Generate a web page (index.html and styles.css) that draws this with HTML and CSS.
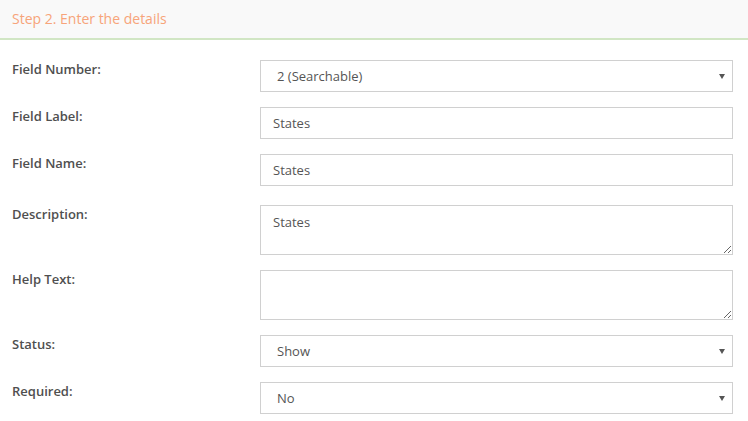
FILE: index.html
```html
<!DOCTYPE html>
<html lang="en">
<head>
<meta charset="utf-8">
<title>Step 2. Enter the details</title>
<link rel="stylesheet" href="styles.css">
</head>
<body>
<div class="panel">
  <div class="panel-heading">Step 2. Enter the details</div>
  <form class="panel-body">
    <div class="row">
      <label class="label">Field Number:</label>
      <div class="select-wrap">
        <select class="control select"><option>2 (Searchable)</option></select>
      </div>
    </div>
    <div class="row">
      <label class="label">Field Label:</label>
      <input class="control" type="text" value="States">
    </div>
    <div class="row">
      <label class="label">Field Name:</label>
      <input class="control" type="text" value="States">
    </div>
    <div class="row row-wide">
      <label class="label">Description:</label>
      <textarea class="control area">States</textarea>
    </div>
    <div class="row">
      <label class="label">Help Text:</label>
      <textarea class="control area"></textarea>
    </div>
    <div class="row">
      <label class="label">Status:</label>
      <div class="select-wrap">
        <select class="control select"><option>Show</option></select>
      </div>
    </div>
    <div class="row">
      <label class="label">Required:</label>
      <div class="select-wrap">
        <select class="control select"><option>No</option></select>
      </div>
    </div>
  </form>
</div>
</body>
</html>
```
FILE: styles.css
```css
* { box-sizing: border-box; }
html, body { margin: 0; padding: 0; background: #fff; }
body { font-family: "Open Sans", "DejaVu Sans", sans-serif; }

.panel-heading {
  height: 40px;
  background: #f9f9f9;
  border-bottom: 2px solid #d1e6c4;
  padding: 0 12px;
  font-size: 14px;
  line-height: 38px;
  color: #f7a47a;
}

.panel-body {
  padding: 20px 15px 0 12px;
}

.row {
  display: grid;
  grid-template-columns: 248px 1fr;
  margin-bottom: 15px;
}
.row-wide { margin-top: 19px; }

.label {
  font-size: 13px;
  font-weight: 600;
  line-height: 18px;
  color: #4f4f4f;
}

.control {
  display: block;
  width: 100%;
  height: 32px;
  margin: 0;
  border: 1px solid #d0d0d0;
  border-radius: 0;
  background: #fff;
  font-family: "Open Sans", "DejaVu Sans", sans-serif;
  font-size: 13px;
  color: #555;
  padding: 0 12px;
  outline: none;
}

.area {
  height: 50px;
  padding: 6px 12px;
  line-height: 20px;
  resize: vertical;
}

.select-wrap { position: relative; }
.select {
  -webkit-appearance: none;
  appearance: none;
  padding-left: 16px;
}
.select-wrap::after {
  content: "";
  position: absolute;
  right: 8px;
  top: 14px;
  border-left: 3px solid transparent;
  border-right: 3px solid transparent;
  border-top: 5px solid #555;
  pointer-events: none;
}
```
